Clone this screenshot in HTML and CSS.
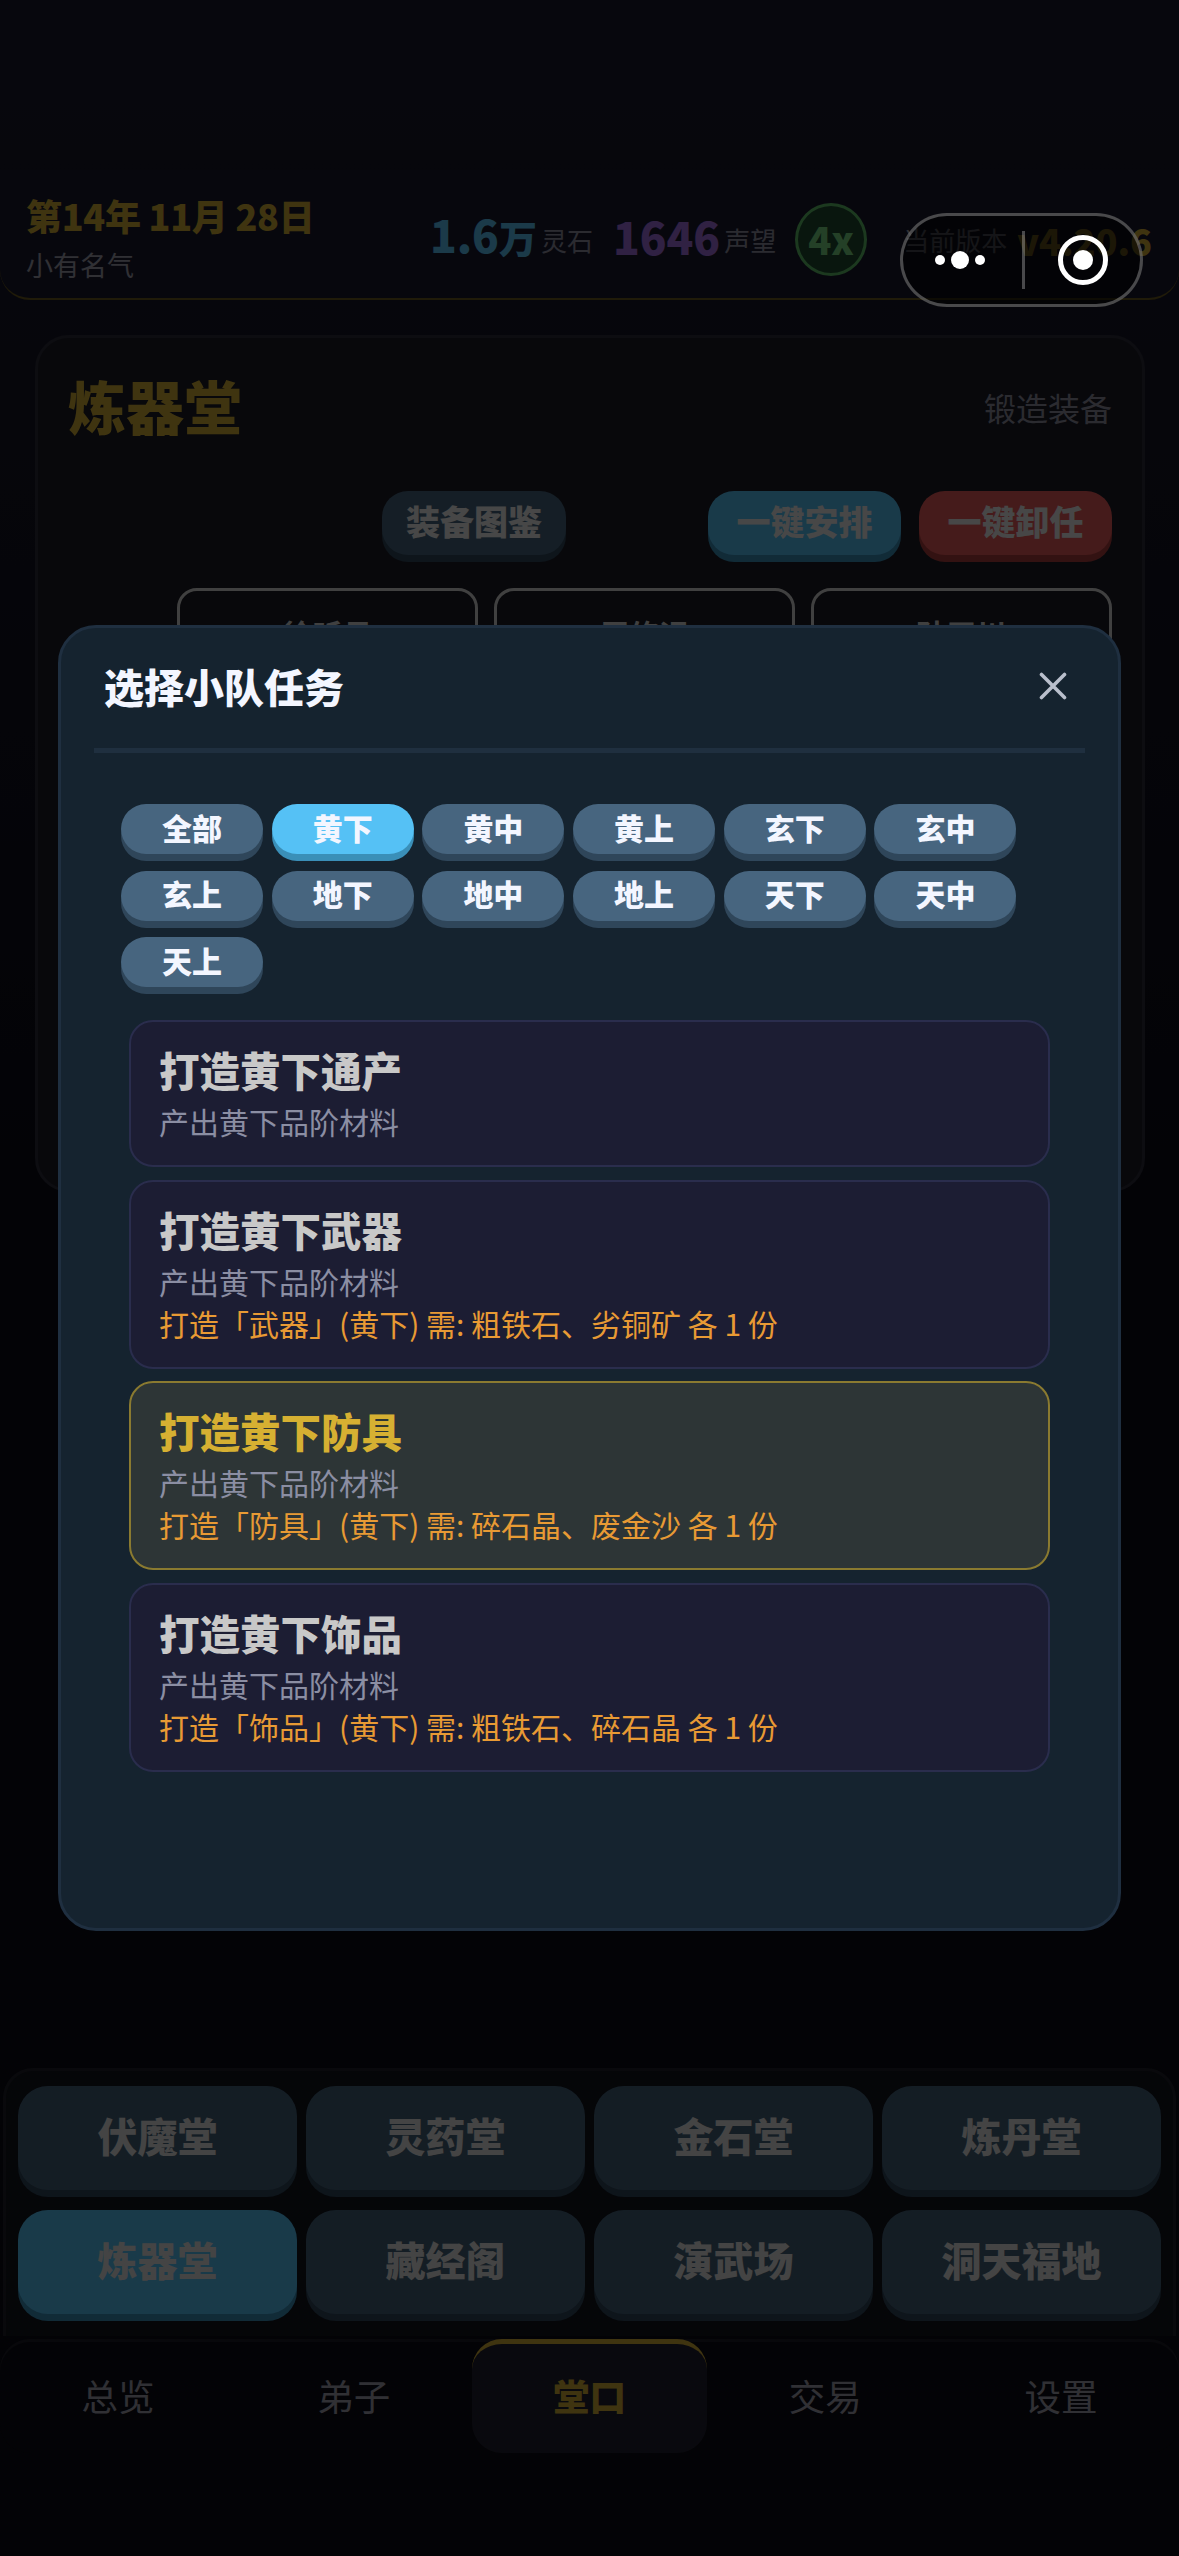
FILE: index.html
```html
<!DOCTYPE html>
<html lang="zh-CN">
<head>
<meta charset="utf-8">
<title>炼器堂</title>
<link rel="stylesheet" href="styles.css">
</head>
<body>
<div class="page">
  <header class="topbar">
    <div class="era">
      <div class="era-date">第14年 11月 28日</div>
      <div class="era-rank">小有名气</div>
    </div>
    <div class="stats">
      <div class="stat stat-stone"><span class="stat-num">1.6<span class="stat-unit">万</span></span><span class="stat-label">灵石</span></div>
      <div class="stat stat-fame"><span class="stat-num">1646</span><span class="stat-label">声望</span></div>
      <div class="speed">4x</div>
      <div class="version"><span class="version-label">当前版本</span><span class="version-num">v4.20.6</span></div>
    </div>
  </header>

  <section class="hall-card">
    <div class="hall-head">
      <h1 class="hall-title">炼器堂</h1>
      <span class="hall-sub">锻造装备</span>
    </div>
    <div class="actions">
      <button class="btn btn-plain">装备图鉴</button>
      <button class="btn btn-blue">一键安排</button>
      <button class="btn btn-red">一键卸任</button>
    </div>
    <div class="squads">
      <div class="squad">徐听月</div>
      <div class="squad">周修远</div>
      <div class="squad">孙平川</div>
    </div>
  </section>

  <nav class="halls">
    <button class="hall-btn">伏魔堂</button>
    <button class="hall-btn">灵药堂</button>
    <button class="hall-btn">金石堂</button>
    <button class="hall-btn">炼丹堂</button>
    <button class="hall-btn is-active">炼器堂</button>
    <button class="hall-btn">藏经阁</button>
    <button class="hall-btn">演武场</button>
    <button class="hall-btn">洞天福地</button>
  </nav>

  <nav class="tabs">
    <div class="tab">总览</div>
    <div class="tab">弟子</div>
    <div class="tab is-active">堂口</div>
    <div class="tab">交易</div>
    <div class="tab">设置</div>
  </nav>
</div>

<div class="overlay">
  <div class="modal">
    <div class="modal-head">
      <h2 class="modal-title">选择小队任务</h2>
      <svg class="modal-close" viewBox="0 0 28 28" aria-label="关闭">
        <path d="M2.5 2.5 L25.5 25.5 M25.5 2.5 L2.5 25.5"></path>
      </svg>
    </div>
    <div class="chips">
      <button class="chip">全部</button>
      <button class="chip is-active">黄下</button>
      <button class="chip">黄中</button>
      <button class="chip">黄上</button>
      <button class="chip">玄下</button>
      <button class="chip">玄中</button>
      <button class="chip">玄上</button>
      <button class="chip">地下</button>
      <button class="chip">地中</button>
      <button class="chip">地上</button>
      <button class="chip">天下</button>
      <button class="chip">天中</button>
      <button class="chip">天上</button>
    </div>
    <div class="tasks">
      <div class="task">
        <div class="task-title">打造黄下通产</div>
        <div class="task-desc">产出黄下品阶材料</div>
      </div>
      <div class="task">
        <div class="task-title">打造黄下武器</div>
        <div class="task-desc">产出黄下品阶材料</div>
        <div class="task-req">打造「武器」(黄下) 需: 粗铁石、劣铜矿 各 1 份</div>
      </div>
      <div class="task is-selected">
        <div class="task-title">打造黄下防具</div>
        <div class="task-desc">产出黄下品阶材料</div>
        <div class="task-req">打造「防具」(黄下) 需: 碎石晶、废金沙 各 1 份</div>
      </div>
      <div class="task">
        <div class="task-title">打造黄下饰品</div>
        <div class="task-desc">产出黄下品阶材料</div>
        <div class="task-req">打造「饰品」(黄下) 需: 粗铁石、碎石晶 各 1 份</div>
      </div>
    </div>
  </div>
</div>

<div class="capsule">
  <svg class="capsule-dots" viewBox="0 0 60 20">
    <circle cx="10" cy="10" r="5"></circle>
    <circle cx="30" cy="10" r="9"></circle>
    <circle cx="50" cy="10" r="5"></circle>
  </svg>
  <span class="capsule-line"></span>
  <svg class="capsule-ring" viewBox="0 0 50 50">
    <circle class="ring-outer" cx="25" cy="25" r="22.5"></circle>
    <circle cx="25" cy="25" r="10"></circle>
  </svg>
</div>
</body>
</html>
```
FILE: styles.css
```css
* { box-sizing: border-box; }
html, body {
  margin: 0;
  height: 2556px;
  overflow: hidden;
  background: #0a0a14;
}
body, button {
  font-family: "Noto Sans CJK SC", "Noto Sans", sans-serif;
}
button { border: 0; padding: 0; }
h1, h2 { margin: 0; }

.page {
  height: 2556px;
  padding-top: 170px;
  display: flex;
  flex-direction: column;
  background: linear-gradient(180deg, #1a1a2e 0, #0a0a14 1300px);
}

/* top bar */
.topbar {
  height: 130px;
  padding: 0 27px 0 26px;
  display: flex;
  justify-content: space-between;
  align-items: flex-start;
  background: #1a1a2e;
  border-bottom: 2px solid #6b5a1e;
  border-radius: 0 0 30px 30px;
  flex: none;
}
.era { margin-top: 21px; }
.era-date {
  font-size: 36px;
  line-height: 48px;
  font-weight: 900;
  letter-spacing: -0.3px;
  color: #d4af37;
}
.era-rank {
  margin-top: 8px;
  font-size: 27px;
  line-height: 36px;
  color: #a0a0b0;
}
.stats {
  margin-top: 33px;
  display: flex;
  align-items: center;
  height: 73px;
}
.stat {
  display: flex;
  align-items: center;
  gap: 4px;
}
.stat-fame { margin-left: 20px; }
.stat-num {
  margin-top: -8px;
  font-size: 44px;
  line-height: 60px;
  font-weight: 900;
}
.stat-unit { font-size: 38px; }
.stat-stone .stat-num { color: #5cc4f4; }
.stat-fame .stat-num { color: #a070e0; }
.stat-label {
  font-size: 26px;
  line-height: 40px;
  color: #8f90a2;
}
.speed {
  margin-left: 19px;
  width: 72px;
  height: 73px;
  border: 3px solid #5fbf6a;
  border-radius: 50%;
  background: #1f4a30;
  color: #78d884;
  font-size: 38px;
  font-weight: 900;
  line-height: 66px;
  text-align: center;
}
.version {
  margin-left: 36px;
  display: flex;
  align-items: center;
  gap: 10px;
}
.version-label {
  font-size: 26px;
  color: #a0a0b0;
}
.version-num {
  font-size: 36px;
  font-weight: 900;
  color: #d4af37;
}

/* hall card */
.hall-card {
  margin: 35px 34px 0 35px;
  height: 857px;
  padding: 0 30px;
  background: #1c1c26;
  border: 3px solid #2c2c3a;
  border-radius: 34px;
  flex: none;
}
.hall-head {
  height: 153px;
  padding-bottom: 53px;
  display: flex;
  align-items: flex-end;
  justify-content: space-between;
}
.hall-title {
  font-size: 58px;
  line-height: 66px;
  font-weight: 900;
  color: #d4af37;
}
.hall-sub {
  font-size: 32px;
  line-height: 62px;
  color: #8f90a2;
}
.actions {
  display: flex;
  justify-content: flex-end;
  gap: 18px;
}
.btn {
  width: 193px;
  height: 64px;
  border-radius: 26px;
  padding-bottom: 5px;
  font-size: 34px;
  font-weight: 900;
  color: #ededed;
}
.btn-plain {
  width: 184px;
  margin-right: 124px;
  background: #47657f;
  box-shadow: 0 7px 0 #2f465a;
}
.btn-blue { background: #55c1f5; box-shadow: 0 7px 0 #3a8fb8; }
.btn-red { background: #e85a5a; box-shadow: 0 7px 0 #ab3f3f; }
.squads {
  margin-top: 33px;
  display: flex;
  justify-content: flex-end;
  gap: 16px;
}
.squad {
  width: 301px;
  height: 130px;
  padding-top: 20px;
  border: 3px solid #d8d8d8;
  border-radius: 20px;
  text-align: center;
  font-size: 30px;
  line-height: 44px;
  font-weight: 700;
  color: #d8d8d8;
}

/* bottom hall switcher */
.halls {
  margin: auto 3px 0;
  height: 268px;
  padding: 15px 12px 0;
  display: grid;
  grid-template-columns: repeat(4, 1fr);
  grid-auto-rows: 104px;
  gap: 20px 9px;
  background: #11141c;
  border: 3px solid #1f2029;
  border-bottom: 0;
  border-radius: 30px 30px 0 0;
  flex: none;
}
.hall-btn {
  border-radius: 30px;
  background: #45627b;
  box-shadow: 0 7px 0 #2f465a;
  padding-bottom: 6px;
  font-size: 40px;
  font-weight: 900;
  color: #e4e4e4;
}
.hall-btn.is-active {
  background: #55c1f5;
  box-shadow: 0 7px 0 #3a8fb8;
}

/* tabs */
.tabs {
  margin: 3px 0 103px;
  height: 114px;
  display: grid;
  grid-template-columns: repeat(5, 1fr);
  background: #0c0c14;
  box-shadow: inset 0 3px 0 #1c1c26;
  border-radius: 30px;
  flex: none;
}
.tab {
  font-size: 36.5px;
  line-height: 114px;
  text-align: center;
  color: #a0a0b0;
}
.tab.is-active {
  height: 114px;
  background: #20202f;
  border-top: 5px solid #d4af37;
  border-radius: 30px;
  line-height: 104px;
  font-weight: 900;
  color: #d4af37;
}

/* overlay + modal */
.overlay {
  position: fixed;
  inset: 0;
  background: rgba(0, 0, 0, .7);
  display: flex;
  align-items: center;
  justify-content: center;
}
.modal {
  width: 1063px;
  height: 1306px;
  padding: 0 33px;
  background: #15232f;
  border: 3px solid #1f2f40;
  border-radius: 38px;
}
.modal-head {
  height: 125px;
  padding: 0 18px 5px 10px;
  display: flex;
  align-items: center;
  justify-content: space-between;
  border-bottom: 5px solid #1f2f3f;
}
.modal-title {
  font-size: 40px;
  line-height: 56px;
  font-weight: 900;
  color: #f3f6ff;
}
.modal-close {
  width: 28px;
  height: 28px;
  fill: none;
  stroke: #b9bfcc;
  stroke-width: 3.6;
  stroke-linecap: round;
}
.chips {
  margin: 51px 0 0 27px;
  display: grid;
  grid-template-columns: repeat(6, 142px);
  grid-auto-rows: 50px;
  gap: 16.5px 8.7px;
}
.chip {
  border-radius: 25px;
  background: #47657f;
  box-shadow: 0 7px 0 #2f465a;
  padding-bottom: 5px;
  font-size: 30px;
  line-height: 40px;
  font-weight: 900;
  color: #f3f6ff;
}
.chip.is-active {
  background: #55c1f5;
  box-shadow: 0 7px 0 #3a8fb8;
}
.tasks {
  margin: 33px 35px 0;
  display: flex;
  flex-direction: column;
  gap: 12.5px;
}
.task {
  padding: 19px 28px 23px;
  background: #1c1d33;
  border: 2px solid #2a2d4d;
  border-radius: 24px;
}
.task-title {
  font-size: 40.5px;
  line-height: 58px;
  font-weight: 900;
  color: #c8c8c8;
}
.task-desc {
  margin-top: 1px;
  font-size: 30px;
  line-height: 42px;
  color: #8b8ea3;
}
.task-req {
  font-size: 30px;
  line-height: 42px;
  color: #e89a34;
}
.task.is-selected {
  background: #2d3536;
  border-color: #8a7a30;
}
.task.is-selected .task-title { color: #d6b032; }

/* mini-program capsule */
.capsule {
  position: fixed;
  left: 900px;
  top: 213px;
  width: 243px;
  height: 94px;
  display: flex;
  align-items: center;
  background: rgba(0, 0, 0, .55);
  border: 3px solid rgba(255, 255, 255, .28);
  border-radius: 47px;
}
.capsule-dots {
  width: 60px;
  height: 20px;
  margin-left: 27px;
  fill: #fff;
}
.capsule-line {
  width: 3px;
  height: 58px;
  margin-left: 32px;
  background: rgba(255, 255, 255, .28);
}
.capsule-ring {
  width: 50px;
  height: 50px;
  margin-left: 33px;
  fill: #fff;
}
.ring-outer {
  fill: none;
  stroke: #fff;
  stroke-width: 5;
}
```
